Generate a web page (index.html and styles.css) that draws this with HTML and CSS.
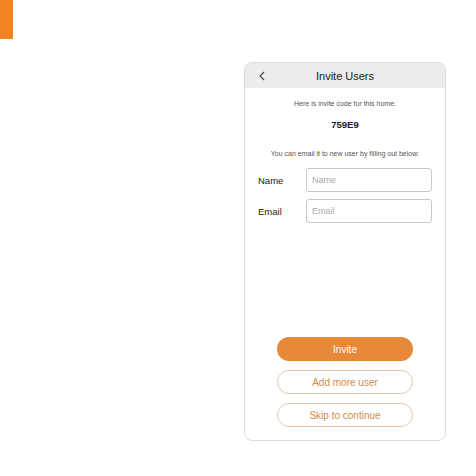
FILE: index.html
```html
<!DOCTYPE html>
<html lang="en">
<head>
  <meta charset="UTF-8" />
  <title>Invite Users</title>
  <link rel="stylesheet" href="styles.css">
</head>
<body>
  <div class="tab"></div>
  <div class="card">
    <div class="header">
      <svg class="back" width="8" height="10" viewBox="0 0 8 10"><path d="M6 1 L2 5 L6 9" fill="none" stroke="#444" stroke-width="1.1"/></svg>
      <span class="title">Invite Users</span>
    </div>
    <div class="content">
      <p class="note">Here is invite code for this home:</p>
      <p class="code">759E9</p>
      <p class="note note-mail">You can email it to new user by filling out below:</p>
      <div class="row">
        <label for="name">Name</label>
        <input type="text" id="name" placeholder="Name" />
      </div>
      <div class="row">
        <label for="email">Email</label>
        <input type="text" id="email" placeholder="Email" />
      </div>
      <div class="actions">
        <button class="btn btn-main">Invite</button>
        <button class="btn btn-line">Add more user</button>
        <button class="btn btn-line">Skip to continue</button>
      </div>
    </div>
  </div>
</body>
</html>
```

FILE: styles.css
```css
body {
  margin: 0;
  background: #fff;
  font-family: 'Liberation Sans', Arial, sans-serif;
  color: #222;
}
.tab {
  width: 13px;
  height: 39px;
  background: #f28522;
}
.card {
  margin: 23px 0 0 244px;
  width: 200px;
  height: 377px;
  border: 1px solid #dcdcdc;
  border-radius: 8px;
  overflow: hidden;
  display: flex;
  flex-direction: column;
}
.header {
  height: 25px;
  background: #ececec;
  display: flex;
  align-items: center;
  justify-content: center;
  position: relative;
}
.back {
  position: absolute;
  left: 13px;
  top: 8px;
}
.title {
  font-size: 11px;
  color: #222;
}
.content {
  flex: 1;
  display: flex;
  flex-direction: column;
  padding: 0 13px 13px 13px;
}
.note {
  margin: 0;
  font-size: 7px;
  color: #555;
  text-align: center;
}
.content > .note:first-child {
  margin-top: 12px;
}
.code {
  margin: 12px 0 0;
  font-size: 9.5px;
  font-weight: bold;
  color: #222;
  text-align: center;
}
.note-mail {
  margin-top: 20px;
  margin-bottom: 11px;
}
.row {
  display: flex;
  align-items: center;
  margin-bottom: 7px;
}
.row label {
  width: 49px;
  font-size: 9.5px;
  color: #222;
}
.row input {
  width: 126px;
  height: 24px;
  box-sizing: border-box;
  border: 1px solid #c8c8c8;
  border-radius: 3px;
  padding: 0 5px;
  font-family: inherit;
  font-size: 9px;
  color: #222;
}
.row input::placeholder {
  color: #aaa;
}
.actions {
  margin-top: auto;
  display: flex;
  flex-direction: column;
  align-items: center;
  gap: 9px;
}
.btn {
  width: 136px;
  height: 24px;
  border-radius: 12px;
  font-family: inherit;
  font-size: 10px;
  cursor: pointer;
}
.btn-main {
  background: #e8893a;
  border: none;
  color: #fff;
}
.btn-line {
  background: #fff;
  border: 1px solid #e6c4a4;
  color: #d28a4a;
}
```
